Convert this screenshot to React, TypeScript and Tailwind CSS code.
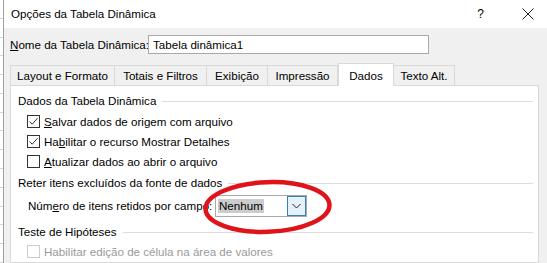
import React from "react";

const font = { fontFamily: '"Liberation Sans", Arial, sans-serif' };

function Check({ checked, disabled }: { checked?: boolean; disabled?: boolean }) {
  return (
    <div
      className={`w-[13px] h-[13px] shrink-0 border bg-white flex items-center justify-center ${
        disabled ? "border-[#cccccc]" : "border-[#333333]"
      }`}
    >
      {checked && (
        <svg width="11" height="11" viewBox="0 0 11 11">
          <path d="M1.5 5.5 L4.2 8.2 L9.5 2.2" fill="none" stroke="#333" strokeWidth="1" />
        </svg>
      )}
    </div>
  );
}

function GroupHeader({ text }: { text: string }) {
  return (
    <div className="flex items-center gap-[6px] pr-[5px] h-[18px]">
      <span className="whitespace-nowrap">{text}</span>
      <div className="flex-1 h-px bg-[#dcdcdc]" />
    </div>
  );
}

function Tab({ label, w, active }: { label: string; w: string; active?: boolean }) {
  return (
    <div
      className={
        active
          ? `${w} h-[23px] bg-white border border-[#d9d9d9] border-b-0 flex justify-center pt-[3px] -mb-px relative z-10`
          : `${w} h-[20px] bg-[#f0f0f0] border-t border-r border-[#d9d9d9] first:border-l flex items-center justify-center pt-[1px]`
      }
    >
      {label}
    </div>
  );
}

export default function App() {
  return (
    <div
      className="w-[547px] h-[263px] relative overflow-hidden bg-[#f0f0f0] flex text-[11.6px] leading-[18px] text-black"
      style={font}
    >
      <div className="w-[4px] h-full bg-white border-r border-[#a0a0a0] flex flex-col">
        {Array.from({ length: 14 }).map((_, i) => (
          <div key={i} className="h-[20px] border-b border-[#d4d4d4]" />
        ))}
      </div>
      <div className="flex-1 flex flex-col">
        <div className="h-[28px] shrink-0 bg-white flex items-center pl-[7px] text-[11.6px]">
          <span>Opções da Tabela Dinâmica</span>
          <span className="ml-auto mr-[38px] text-[12px]">?</span>
          <svg width="12" height="12" viewBox="0 0 12 12" className="mr-[13px]">
            <path d="M0.5 0.5 L11.5 11.5 M11.5 0.5 L0.5 11.5" stroke="#222" strokeWidth="1" />
          </svg>
        </div>
        <div className="flex items-center pl-[6px] mt-[7px] h-[19px] shrink-0">
          <span className="w-[138px] whitespace-nowrap">
            <span className="underline">N</span>ome da Tabela Dinâmica:
          </span>
          <div className="w-[281px] h-[19px] bg-white border border-[#a9a9a9] flex items-center pl-[4px]">
            Tabela dinâmica1
          </div>
        </div>
        <div className="flex items-end pl-[6px] mt-[9px] shrink-0">
          <Tab label="Layout e Formato" w="w-[105px]" />
          <Tab label="Totais e Filtros" w="w-[92px]" />
          <Tab label="Exibição" w="w-[61px]" />
          <Tab label="Impressão" w="w-[70px]" />
          <Tab label="Dados" w="w-[56px]" active />
          <Tab label="Texto Alt." w="w-[61px]" />
        </div>
        <div className="ml-[6px] w-[529px] flex-1 bg-white border border-[#d9d9d9] pl-[7px] pt-[6px] flex flex-col">
          <GroupHeader text="Dados da Tabela Dinâmica" />
          <div className="flex flex-col gap-[7px] mt-[5px] pl-[9px]">
            <div className="flex items-center gap-[4px] h-[13px]">
              <Check checked />
              <span className="whitespace-nowrap">
                <span className="underline">S</span>alvar dados de origem com arquivo
              </span>
            </div>
            <div className="flex items-center gap-[4px] h-[13px]">
              <Check checked />
              <span className="whitespace-nowrap">
                Ha<span className="underline">b</span>ilitar o recurso Mostrar Detalhes
              </span>
            </div>
            <div className="flex items-center gap-[4px] h-[13px]">
              <Check />
              <span className="whitespace-nowrap">
                <span className="underline">A</span>tualizar dados ao abrir o arquivo
              </span>
            </div>
          </div>
          <div className="mt-[6px]">
            <GroupHeader text="Reter itens excluídos da fonte de dados" />
          </div>
          <div className="flex items-center pl-[10px] mt-[3px] h-[22px]">
            <span className="w-[187px] shrink-0 whitespace-nowrap">
              Núm<span className="underline">e</span>ro de itens retidos por campo:
            </span>
            <div className="w-[92px] h-[22px] bg-white border border-[#a9a9a9] flex items-center pl-[2px]">
              <span className="bg-[#cccccc] px-[1px] h-[14px] flex items-center">Nenhum</span>
              <div className="ml-auto w-[19px] h-[20px] bg-[#e5f1fb] border border-[#3c7fb1] flex items-center justify-center">
                <svg width="9" height="6" viewBox="0 0 9 6">
                  <path d="M0.5 1 L4.5 5 L8.5 1" fill="none" stroke="#222" strokeWidth="1" />
                </svg>
              </div>
            </div>
          </div>
          <div className="mt-[6px]">
            <GroupHeader text="Teste de Hipóteses" />
          </div>
          <div className="flex items-center gap-[4px] h-[13px] mt-[4px] pl-[9px] text-[#9a9a9a]">
            <Check disabled />
            <span className="whitespace-nowrap">Habilitar edição de célula na área de valores</span>
          </div>
        </div>
      </div>
      <svg
        className="absolute left-0 top-0 pointer-events-none"
        width="547"
        height="263"
        viewBox="0 0 547 263"
      >
        <ellipse
          cx="267.5"
          cy="207"
          rx="62"
          ry="24.8"
          fill="none"
          stroke="#e0131b"
          strokeWidth="4.5"
          transform="rotate(-2 267.5 207)"
        />
      </svg>
    </div>
  );
}
